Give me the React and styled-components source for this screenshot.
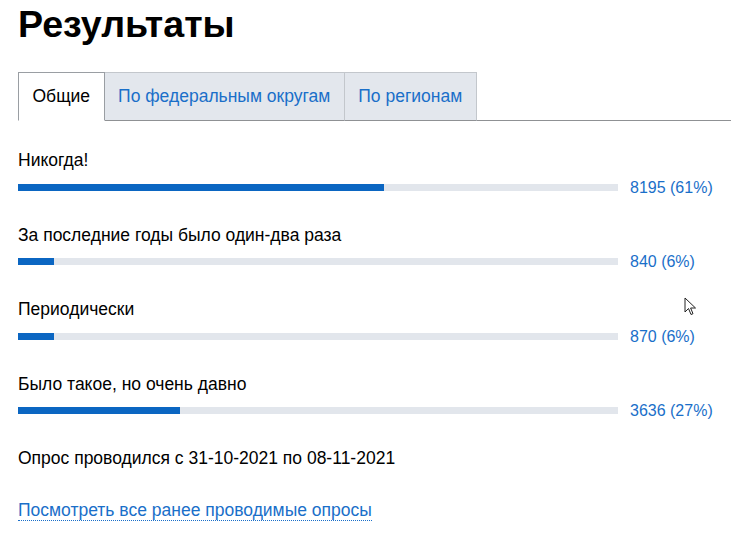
import React from "react";
import styled, { createGlobalStyle } from "styled-components";

const Global = createGlobalStyle`
  html, body { margin: 0; padding: 0; background: #fff; }
  body { font-family: "Liberation Sans", Arial, sans-serif; color: #000; }
`;

const Page = styled.div`
  position: relative;
  padding: 2px 0 0 18px;
  width: 731px;
  box-sizing: border-box;
`;

const Title = styled.h1`
  margin: 0 0 26px;
  font-size: 37.6px;
  line-height: 44px;
  font-weight: 700;
`;

const Tabs = styled.div`
  display: flex;
  border-bottom: 1px solid #8f9194;
  height: 48px;
`;

const Tab = styled.div`
  display: flex;
  align-items: center;
  padding: 0 13.5px;
  height: 49px;
  margin-bottom: -1px;
  box-sizing: border-box;
  font-size: 17.5px;
  border: 1px solid ${(p) => (p.$active ? "#9a9ea3" : "#c3c7cc")};
  border-bottom: ${(p) => (p.$active ? "1px solid #fff" : "1px solid #8f9194")};
  border-left-width: ${(p) => (p.$first ? "1px" : "0")};
  background: ${(p) => (p.$active ? "#fff" : "#e3e7ed")};
  color: ${(p) => (p.$active ? "#000" : "#1a6fc9")};
`;

const List = styled.div`
  padding-top: 28px;
`;

const Row = styled.div`
  display: grid;
  grid-template-columns: 600px auto;
  column-gap: 12px;
  row-gap: 5.5px;
  margin-bottom: 25.17px;
  align-items: center;
`;

const Label = styled.div`
  grid-column: 1 / -1;
  font-size: 17.5px;
  line-height: 22px;
`;

const Track = styled.div`
  height: 7px;
  background: #e2e6ec;
  margin-top: -1px;
`;

const Fill = styled.div`
  height: 100%;
  background: #0b66c2;
`;

const Value = styled.div`
  font-size: 16px;
  line-height: 22px;
  color: #1a6fc9;
`;

const Note = styled.div`
  font-size: 17.5px;
  line-height: 22px;
  margin-top: -0.5px;
`;

const LinkRow = styled.div`
  margin-top: 30px;
  font-size: 17.5px;
  line-height: 22px;
`;

const Link = styled.a`
  color: #1a6fc9;
  text-decoration: none;
  border-bottom: 1px dotted #1a6fc9;
`;

const Cursor = styled.svg`
  position: absolute;
  left: 684px;
  top: 297px;
`;

const rows = [
  { label: "Никогда!", value: "8195 (61%)", pct: 61 },
  { label: "За последние годы было один-два раза", value: "840 (6%)", pct: 6 },
  { label: "Периодически", value: "870 (6%)", pct: 6 },
  { label: "Было такое, но очень давно", value: "3636 (27%)", pct: 27 },
];

export default function App() {
  return (
    <>
      <Global />
      <Page>
        <Title>Результаты</Title>
        <Tabs>
          <Tab $active $first>Общие</Tab>
          <Tab>По федеральным округам</Tab>
          <Tab>По регионам</Tab>
        </Tabs>
        <List>
          {rows.map((r) => (
            <Row key={r.label}>
              <Label>{r.label}</Label>
              <Track>
                <Fill style={{ width: `${r.pct}%` }} />
              </Track>
              <Value>{r.value}</Value>
            </Row>
          ))}
        </List>
        <Note>Опрос проводился с 31-10-2021 по 08-11-2021</Note>
        <LinkRow>
          <Link href="#">Посмотреть все ранее проводимые опросы</Link>
        </LinkRow>
        <Cursor width="14" height="20" viewBox="0 0 14 20">
          <path d="M1 1 L1 15 L4.5 11.5 L7 17.5 L9 16.7 L6.6 11 L11.5 11 Z" fill="#fff" stroke="#222" strokeWidth="1" strokeLinejoin="round" />
        </Cursor>
      </Page>
    </>
  );
}
